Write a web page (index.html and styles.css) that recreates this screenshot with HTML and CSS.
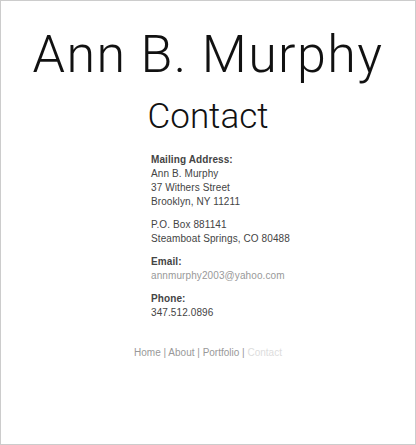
FILE: index.html
```html
<!DOCTYPE html>
<html>
<head>
<meta charset="utf-8">
<link rel="stylesheet" href="styles.css">
</head>
<body>
<div class="page">
  <h1 class="name">Ann B. Murphy</h1>
  <h2 class="title">Contact</h2>
  <div class="info">
    <div class="group">
      <div class="label">Mailing Address:</div>
      <div>Ann B. Murphy</div>
      <div>37 Withers Street</div>
      <div>Brooklyn, NY 11211</div>
    </div>
    <div class="group">
      <div>P.O. Box 881141</div>
      <div>Steamboat Springs, CO 80488</div>
    </div>
    <div class="group">
      <div class="label">Email:</div>
      <div class="email">annmurphy2003@yahoo.com</div>
    </div>
    <div class="group">
      <div class="label">Phone:</div>
      <div>347.512.0896</div>
    </div>
  </div>
  <div class="nav">
    <a href="#">Home</a> | <a href="#">About</a> | <a href="#">Portfolio</a> | <span class="current">Contact</span>
  </div>
</div>
</body>
</html>
```
FILE: styles.css
```css
html, body {
  margin: 0;
  padding: 0;
  background: #fff;
}
.page {
  box-sizing: border-box;
  height: 445px;
  border: 1px solid #cccccc;
  font-family: "Liberation Sans", Arial, sans-serif;
  font-size: 10px;
  line-height: 14px;
  color: #444;
}
.name {
  margin: 24px 0 0 0;
  text-align: center;
  font-family: Roboto, sans-serif;
  font-weight: 300;
  font-size: 52px;
  line-height: 60px;
  color: #111;
  letter-spacing: 1.4px;
}
.title {
  margin: 12px 0 0 0;
  text-align: center;
  font-family: Roboto, sans-serif;
  font-weight: 300;
  font-size: 35px;
  line-height: 40px;
  color: #111;
}
.info {
  margin: 16px 0 0 150px;
  letter-spacing: 0.1px;
}
.group {
  margin-bottom: 9px;
}
.label {
  font-weight: bold;
}
.email {
  color: #999;
}
.nav {
  margin-top: 26px;
  text-align: center;
  color: #999;
}
.nav a {
  color: #999;
  text-decoration: none;
}
.nav .current {
  color: #ddd;
}
```
